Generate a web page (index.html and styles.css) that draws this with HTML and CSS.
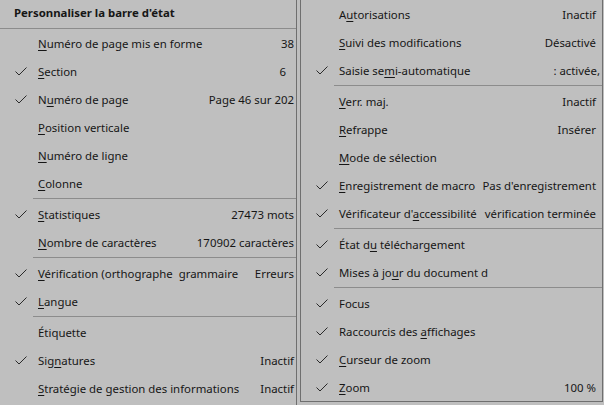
FILE: index.html
```html
<!DOCTYPE html>
<html lang="fr">
<head>
<meta charset="utf-8">
<title>Personnaliser la barre d'état</title>
<link rel="stylesheet" href="styles.css">
</head>
<body>
<div class="screen">
  <div class="menu menu-left">
    <div class="title">Personnaliser la barre d'état</div>
    <div class="sep sep-full"></div>
    <div class="item"><span class="chk"></span><span class="label"><u>N</u>uméro de page mis en forme</span><span class="val">38</span></div>
    <div class="item"><span class="chk"><svg viewBox="0 0 12 9" width="12" height="9"><path d="M0.5 4.5 L4 8 L11.5 0.5"/></svg></span><span class="label"><u>S</u>ection</span><span class="val val-6">6</span></div>
    <div class="item"><span class="chk"><svg viewBox="0 0 12 9" width="12" height="9"><path d="M0.5 4.5 L4 8 L11.5 0.5"/></svg></span><span class="label">N<u>u</u>méro de page</span><span class="val">Page 46 sur 202</span></div>
    <div class="item"><span class="chk"></span><span class="label"><u>P</u>osition verticale</span></div>
    <div class="item"><span class="chk"></span><span class="label"><u>N</u>uméro de ligne</span></div>
    <div class="item"><span class="chk"></span><span class="label"><u>C</u>olonne</span></div>
    <div class="sep"></div>
    <div class="item"><span class="chk"><svg viewBox="0 0 12 9" width="12" height="9"><path d="M0.5 4.5 L4 8 L11.5 0.5"/></svg></span><span class="label"><u>S</u>tatistiques</span><span class="val">27473 mots</span></div>
    <div class="item"><span class="chk"></span><span class="label"><u>N</u>ombre de caractères</span><span class="val">170902 caractères</span></div>
    <div class="sep"></div>
    <div class="item"><span class="chk"><svg viewBox="0 0 12 9" width="12" height="9"><path d="M0.5 4.5 L4 8 L11.5 0.5"/></svg></span><span class="label"><u>V</u>érification (orthographe&nbsp; grammaire</span><span class="val">Erreurs</span></div>
    <div class="item"><span class="chk"><svg viewBox="0 0 12 9" width="12" height="9"><path d="M0.5 4.5 L4 8 L11.5 0.5"/></svg></span><span class="label"><u>L</u>angue</span></div>
    <div class="sep"></div>
    <div class="item"><span class="chk"></span><span class="label">Étiquette</span></div>
    <div class="item"><span class="chk"><svg viewBox="0 0 12 9" width="12" height="9"><path d="M0.5 4.5 L4 8 L11.5 0.5"/></svg></span><span class="label">Sig<u>n</u>atures</span><span class="val">Inactif</span></div>
    <div class="item"><span class="chk"></span><span class="label"><u>S</u>tratégie de gestion des informations</span><span class="val">Inactif</span></div>
  </div>
  <div class="menu menu-right">
    <div class="item"><span class="chk"></span><span class="label">A<u>u</u>torisations</span><span class="val">Inactif</span></div>
    <div class="item"><span class="chk"></span><span class="label"><u>S</u>uivi des modifications</span><span class="val">Désactivé</span></div>
    <div class="item"><span class="chk"><svg viewBox="0 0 12 9" width="12" height="9"><path d="M0.5 4.5 L4 8 L11.5 0.5"/></svg></span><span class="label">Saisie se<u>m</u>i-automatique</span><span class="val val-clip">: activée,</span></div>
    <div class="sep"></div>
    <div class="item"><span class="chk"></span><span class="label"><u>V</u>err. maj.</span><span class="val">Inactif</span></div>
    <div class="item"><span class="chk"></span><span class="label"><u>R</u>efrappe</span><span class="val">Insérer</span></div>
    <div class="item"><span class="chk"></span><span class="label"><u>M</u>ode de sélection</span></div>
    <div class="item"><span class="chk"><svg viewBox="0 0 12 9" width="12" height="9"><path d="M0.5 4.5 L4 8 L11.5 0.5"/></svg></span><span class="label"><u>E</u>nregistrement de macro</span><span class="val">Pas d'enregistrement</span></div>
    <div class="item"><span class="chk"><svg viewBox="0 0 12 9" width="12" height="9"><path d="M0.5 4.5 L4 8 L11.5 0.5"/></svg></span><span class="label">Vérificateur d'<u>a</u>ccessibilité</span><span class="val">vérification terminée</span></div>
    <div class="sep"></div>
    <div class="item"><span class="chk"><svg viewBox="0 0 12 9" width="12" height="9"><path d="M0.5 4.5 L4 8 L11.5 0.5"/></svg></span><span class="label">État d<u>u</u> téléchargement</span></div>
    <div class="item"><span class="chk"><svg viewBox="0 0 12 9" width="12" height="9"><path d="M0.5 4.5 L4 8 L11.5 0.5"/></svg></span><span class="label">Mises à jo<u>u</u>r du document d</span></div>
    <div class="sep"></div>
    <div class="item"><span class="chk"><svg viewBox="0 0 12 9" width="12" height="9"><path d="M0.5 4.5 L4 8 L11.5 0.5"/></svg></span><span class="label">Focus</span></div>
    <div class="item"><span class="chk"><svg viewBox="0 0 12 9" width="12" height="9"><path d="M0.5 4.5 L4 8 L11.5 0.5"/></svg></span><span class="label">Raccourcis des <u>a</u>ffichages</span></div>
    <div class="item"><span class="chk"><svg viewBox="0 0 12 9" width="12" height="9"><path d="M0.5 4.5 L4 8 L11.5 0.5"/></svg></span><span class="label"><u>C</u>urseur de zoom</span></div>
    <div class="item"><span class="chk"><svg viewBox="0 0 12 9" width="12" height="9"><path d="M0.5 4.5 L4 8 L11.5 0.5"/></svg></span><span class="label"><u>Z</u>oom</span><span class="val">100 %</span></div>
  </div>
</div>
</body>
</html>
```
FILE: styles.css
```css
html, body {
  margin: 0;
  padding: 0;
  background: #bfbfbf;
}
body {
  font-family: "Segoe UI", "Noto Sans", "Liberation Sans", sans-serif;
  font-size: 11.4px;
  color: #161616;
  width: 604px;
  height: 405px;
  overflow: hidden;
}
.screen {
  display: flex;
  height: 405px;
  gap: 3px;
}
.menu {
  display: flex;
  flex-direction: column;
  background: #bfbfbf;
  overflow: hidden;
}
.menu-left {
  width: 296px;
  border-right: 1px solid #6f6f6f;
  height: 405px;
}
.menu-right {
  width: 301px;
  border-left: 1px solid #6f6f6f;
  border-right: 1px solid #6f6f6f;
  border-bottom: 1px solid #6f6f6f;
  height: 401px;
  align-self: flex-start;
}
.title {
  height: 28px;
  line-height: 26px;
  padding-left: 14px;
  font-weight: bold;
  white-space: nowrap;
}
.item {
  display: grid;
  grid-template-columns: 38px 1fr;
  align-items: center;
  height: 28px;
  line-height: 25px;
  white-space: nowrap;
}
.chk {
  grid-column: 1;
  grid-row: 1;
  display: flex;
  align-items: center;
  padding-left: 15px;
  height: 100%;
}
.chk svg {
  display: block;
  fill: none;
  stroke: #2a2a2a;
  stroke-width: 1;
}
.label {
  grid-column: 2;
  grid-row: 1;
  justify-self: start;
}
.label u {
  text-decoration-thickness: 1px;
  text-underline-offset: 2px;
}
.val {
  grid-column: 2;
  grid-row: 1;
  justify-self: end;
}
.menu-left .val {
  padding-right: 2px;
}
.menu-left .val-6 {
  padding-right: 10px;
}
.menu-right .val {
  padding-right: 6px;
}
.menu-right .val-clip {
  padding-right: 2px;
}
.sep {
  height: 3px;
  flex: 0 0 3px;
}
.sep::after {
  content: "";
  display: block;
  margin-top: 1px;
  margin-left: 33px;
  height: 1px;
  background: #8c8c8c;
}
.sep-full {
  height: 1px;
  flex: 0 0 1px;
  background: #8c8c8c;
}
.sep-full::after {
  display: none;
}
```
